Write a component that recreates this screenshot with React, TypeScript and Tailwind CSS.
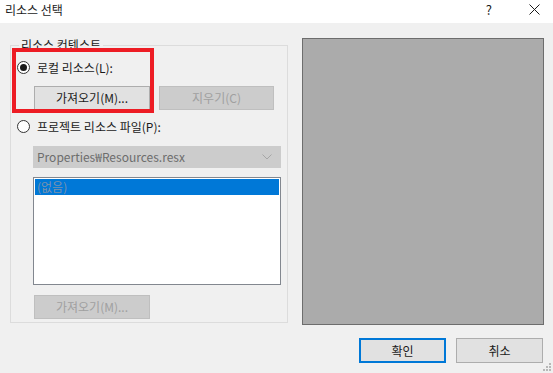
import React from "react";

const font = { fontFamily: '"Noto Sans CJK KR", "Noto Sans", sans-serif' };

function Radio({ checked }: { checked?: boolean }) {
  return (
    <div className="w-[13px] h-[13px] rounded-full border border-[#333333] bg-white flex items-center justify-center shrink-0">
      {checked && <div className="w-[7px] h-[7px] rounded-full bg-[#1a1a1a]" />}
    </div>
  );
}

function Btn({ children, disabled, w = "w-[116px]" }: { children: React.ReactNode; disabled?: boolean; w?: string }) {
  return (
    <div
      className={`${w} h-[24px] flex items-center justify-center text-[12px] border ${
        disabled ? "bg-[#cccccc] border-[#bfbfbf] text-[#a0a0a0]" : "bg-[#e1e1e1] border-[#adadad] text-[#1a1a1a]"
      }`}
    >
      {children}
    </div>
  );
}

export default function App() {
  return (
    <div className="relative w-[553px] h-[373px] bg-[#f0f0f0] overflow-hidden text-[#1a1a1a]" style={font}>
      {/* title bar */}
      <div className="h-[23px] bg-white flex items-center justify-between">
        <div className="pl-[5px] text-[12px] leading-none -mt-[4px]">리소스 선택</div>
        <div className="flex items-center -mt-[4px]">
          <div className="text-[13px] leading-none">?</div>
          <svg width="11" height="11" viewBox="0 0 11 11" className="ml-[37px] mr-[13px]">
            <path d="M0.5 0.5 L10.5 10.5 M10.5 0.5 L0.5 10.5" stroke="#1a1a1a" strokeWidth="1" />
          </svg>
        </div>
      </div>

      {/* main row */}
      <div className="flex items-start pl-[10px] pt-[15px]">
        {/* group box */}
        <div className="relative mt-[7px] w-[278px] h-[278px] border border-[#dcdcdc] flex flex-col pl-[6px]">
          <div className="absolute -top-[9px] left-[8px] px-[2px] bg-[#f0f0f0] text-[12px] leading-[16px]">
            리소스 컨텐스트
          </div>
          <div className="mt-[13px] h-[17px] flex items-center">
            <Radio checked />
            <span className="ml-[7px] text-[12px]">로컬 리소스(L):</span>
          </div>
          <div className="mt-[10px] ml-[17px] flex gap-[9px]">
            <Btn>가져오기(M)...</Btn>
            <Btn disabled w="w-[115px]">지우기(C)</Btn>
          </div>
          <div className="mt-[8px] h-[17px] flex items-center">
            <Radio />
            <span className="ml-[7px] text-[12px]">프로젝트 리소스 파일(P):</span>
          </div>
          <div className="mt-[11px] ml-[16px] w-[248px] h-[22px] bg-[#cccccc] border border-[#cccccc] flex items-center justify-between pl-[3px] pr-[8px]">
            <span className="text-[12px] text-[#6d6d6d]">Properties₩Resources.resx</span>
            <svg width="10" height="6" viewBox="0 0 10 6">
              <path d="M0.5 0.5 L5 5 L9.5 0.5" stroke="#a6a6a6" fill="none" strokeWidth="1" />
            </svg>
          </div>
          <div className="mt-[9px] ml-[16px] w-[248px] h-[108px] bg-white border border-[#82878f] p-[1px]">
            <div className="h-[16px] bg-[#0078d7] flex items-center pl-[2px]">
              <span className="text-[12px] text-[#7d93ad] leading-none">(없음)</span>
            </div>
          </div>
          <div className="mt-[10px] ml-[17px]">
            <Btn disabled>가져오기(M)...</Btn>
          </div>
        </div>

        {/* preview */}
        <div className="ml-[14px] w-[242px] h-[287px] bg-[#ababab] border border-[#6d6d6d]" />
      </div>

      {/* bottom buttons */}
      <div className="flex justify-end gap-[10px] pr-[10px] mt-[13px]">
        <div className="w-[87px] h-[25px] bg-[#e1e1e1] border-2 border-[#0078d7] flex items-center justify-center text-[12px]">
          확인
        </div>
        <div className="w-[87px] h-[25px] bg-[#e1e1e1] border border-[#adadad] flex items-center justify-center text-[12px]">
          취소
        </div>
      </div>

      {/* red annotation */}
      <div className="absolute left-[12px] top-[48px] w-[142px] h-[65px] border-[4px] border-[#ed1c24]" />

      {/* size grip */}
      <div className="absolute right-[2px] bottom-[2px] w-[8px] h-[8px]">
        <div className="absolute right-0 top-0 w-[2px] h-[2px] bg-[#b8b8b8]" />
        <div className="absolute right-0 bottom-0 w-[2px] h-[2px] bg-[#b8b8b8]" />
        <div className="absolute right-[3px] bottom-0 w-[2px] h-[2px] bg-[#b8b8b8]" />
        <div className="absolute right-[6px] bottom-0 w-[2px] h-[2px] bg-[#b8b8b8]" />
        <div className="absolute right-0 bottom-[3px] w-[2px] h-[2px] bg-[#b8b8b8]" />
        <div className="absolute right-[3px] bottom-[3px] w-[2px] h-[2px] bg-[#b8b8b8]" />
      </div>
    </div>
  );
}
